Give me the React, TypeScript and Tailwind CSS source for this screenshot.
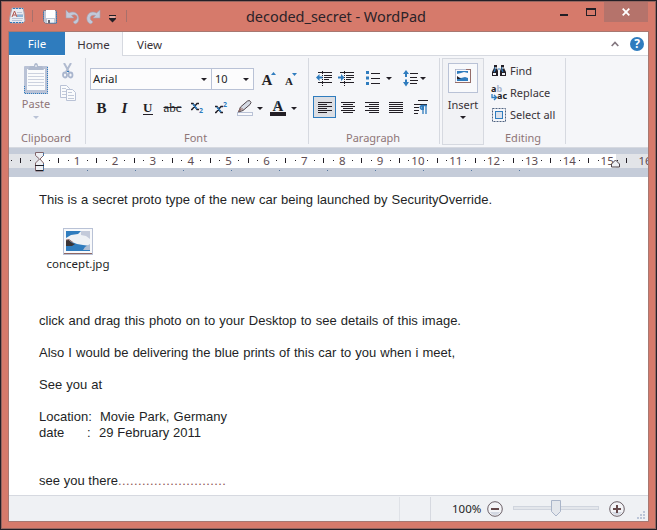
import type { ReactNode } from "react";

const ui = "font-['Noto_Sans','Open_Sans',sans-serif]";
const INK = "#231f26";
const BLUE = "#2f7cbe";
const STEEL = "#b9c2d6";

function Svg({ w, h, className = "", children }: { w: number; h: number; className?: string; children: ReactNode }) {
  return (
    <svg width={w} height={h} viewBox={`0 0 ${w} ${h}`} className={`block shrink-0 ${className}`} fill="none">
      {children}
    </svg>
  );
}

function Caret({ color = INK, className = "" }: { color?: string; className?: string }) {
  return (
    <Svg w={6} h={3} className={className}>
      <path d="M0 0h6L3 3z" fill={color} />
    </Svg>
  );
}

function Cell({ className, children }: { className: string; children: ReactNode }) {
  return <div className={`flex shrink-0 items-center justify-center ${className}`}>{children}</div>;
}

function Separator() {
  return <div className="mt-[2px] h-[86px] w-px shrink-0 bg-[#d6d9e0]" />;
}

function Picture({ w, h }: { w: number; h: number }) {
  return (
    <svg width={w} height={h} viewBox="0 0 30 27" className="block" fill="none">
      <rect x=".5" y=".5" width="29" height="26" fill="#f8f9fb" stroke="#b9c2d6" />
      <path d="M1 25.500h28" stroke="#8e6764" />
      <rect x="3" y="3" width="24" height="20" fill="#eef1f5" />
      <path d="M3 3h15l-3 3-7 1-5 3z" fill={BLUE} />
      <path d="M18 3h9v8l-4-3-5-1z" fill="#c3cada" />
      <path d="M3 12l6 2 5 2 6 1 7 1v5H3z" fill={BLUE} />
      <path d="M3 12l3 0 3 3 3 1-3 2H3z" fill="#3b3435" />
      <path d="M3 12l3-.5 4 3" stroke="#956d69" />
      <path d="M22 19l5-3v6h-7z" fill="#aebdd2" />
    </svg>
  );
}

function TitleBar() {
  return (
    <div className="flex h-[30px] w-[655px] shrink-0 items-start">
      <Svg w={112} h={28} className="ml-[7px]">
        <path d="M3 6h11l1 4 1 9-2 2H2l-2-2 2-9z" fill="#e9ecf1" stroke="#a89da8" />
        <path d="M4 6.500h10M1 20.500h13" stroke={BLUE} strokeDasharray="2 1" />
        <path d="M8 10.500h5M8 12.500h6M3 16.500h11M3 18.500h10" stroke={STEEL} />
        <path d="M3 15l2.500-6L8 15M4 13h3" stroke="#b0554e" />
        <path d="M8 14h6" stroke={BLUE} />
        <path d="M23.500 8v12" stroke="#a8706b" />
        <path d="M34.500 8.500h13v13h-11l-2-2z" fill="#bfc5d3" stroke="#8e7983" />
        <rect x="37" y="8" width="9" height="8" fill="#fff" />
        <path d="M38 17h7v4h-7z" fill="#f3f5f8" />
        <path d="M47.500 10v11H40M34.500 10v7" stroke={BLUE} strokeDasharray="1 1" />
        <path d="M39 18h2v3h-2z" fill="#6b6670" />
        <path d="M57 8v8h8l-2.500-2.500c4-2 7 1 5 4L64 20l2 2c4-1 4-5 3.500-7-1-5-6-6-9.500-4z" fill="#c2c9d9" stroke="#a79eac" strokeWidth=".6" />
        <path d="M91 8v8h-7l2.500-2.500c-4-1-6 1-5 4L84 20l-2 2c-4-1-4.500-5-4-7 1-5 6-6 9.500-4z" fill="#c2c9d9" stroke="#a79eac" strokeWidth=".6" />
        <path d="M100 13.500h7" stroke={INK} />
        <path d="M100 16h7v1l-3.500 3.500L100 17z" fill={INK} />
        <path d="M101 15h5" stroke="#fff" strokeWidth=".7" />
      </Svg>
      <div className="mt-[8px] ml-[5px] h-[12px] w-px shrink-0 bg-[#a8706b]" />
      <div className={`${ui} mt-[4px] ml-[119px] w-[179px] shrink-0 text-[14.500px] leading-[20px] tracking-[-0.050px] whitespace-nowrap text-[#2b2228] [text-align-last:justify]`}>
        decoded_secret - WordPad
      </div>
      <div className="mt-[12px] ml-[135px] h-[2px] w-[8px] shrink-0 bg-[#231f26]" />
      <div className="mt-[6px] ml-[18px] h-[8px] w-[10px] shrink-0 border border-t-2 border-[#231f26]" />
      <div className="ml-[8px] flex h-[20px] w-[44px] shrink-0 items-center justify-center bg-[#b5736b]">
        <Svg w={8} h={8}>
          <path d="M.7.700l6.600 6.600M7.300.700L.7 7.300" stroke="#fff" strokeWidth="1.800" />
        </Svg>
      </div>
    </div>
  );
}

function Tabs() {
  return (
    <div className={`${ui} flex h-[24px] shrink-0 bg-white text-[11.500px] leading-[25px] text-[#3a3338]`}>
      <div className="h-[23px] w-[56px] bg-[#2f7cbe] text-center leading-[23px] text-white">File</div>
      <div className="h-[24px] w-[58px] border-r border-[#d6d9e0] bg-[#f5f6f9] text-center">Home</div>
      <div className="flex flex-1 items-center border-b border-[#d6d9e0] pl-[14px]">
        <span className="flex-1 pt-[2px]">View</span>
        <Svg w={8} h={6} className="mr-[11px]">
          <path d="M.7 5L4 1.500 7.300 5" stroke="#83777f" strokeWidth="1.700" />
        </Svg>
        <div className="mr-[4px] flex h-[14px] w-[14px] items-center justify-center rounded-full bg-[#2f7cbe] text-[12px] leading-[14px] font-bold text-white">?</div>
      </div>
    </div>
  );
}

function GroupLabel({ className = "", children }: { className?: string; children: ReactNode }) {
  return <div className={`${ui} text-[11px] leading-[16px] text-[#8e7577] ${className}`}>{children}</div>;
}

function Clipboard() {
  return (
    <div className="flex w-[76px] shrink-0 flex-col">
      <div className="flex h-[74px]">
        <div className="ml-[13px] flex w-[28px] flex-col items-center pt-[7px]">
          <Svg w={26} h={32}>
            <rect x="1" y="3" width="24" height="28" rx="1" fill="#b9c2d6" />
            <path d="M24.500 4v26.500H1.500V22" stroke={BLUE} strokeDasharray="1 1" />
            <rect x="4" y="6" width="18" height="21" fill="#fafbfc" />
            <path d="M5 10.500h16M5 13.500h16M5 16.500h16M5 19.500h16M5 22.500h16" stroke="#ccd2df" />
            <path d="M7 3h4c0-4 4-4 4 0h4l2 4H5z" fill="#aeb9ce" />
            <path d="M12 3h2" stroke="#fff" />
          </Svg>
          <span className={`${ui} mt-[1px] text-[11px] leading-[16px] text-[#8e7577]`}>Paste</span>
          <Caret color="#b9c2d6" className="mt-[4px]" />
        </div>
        <div className="ml-[10px] pt-[7px]">
          <Svg w={16} h={40}>
            <path d="M4 0l5 9M11 0L6 9" stroke="#b1bbd0" strokeWidth="2" />
            <ellipse cx="5" cy="12" rx="2" ry="2.500" stroke="#aab6ce" strokeWidth="1.800" />
            <ellipse cx="10.500" cy="12" rx="2" ry="2.500" stroke="#aab6ce" strokeWidth="1.800" />
            <path d="M7 8.500h2" stroke={BLUE} />
            <path d="M.5 22.500h6l3 3v9h-9z" fill="#fafbfc" stroke="#b9c2d6" />
            <path d="M6.500 26.500h6l3 3v8h-9z" fill="#fafbfc" stroke="#b9c2d6" />
            <path d="M2 25.500h4M2 28.500h4M2 31.500h4M8 29.500h4M8 32.500h6M8 35.500h6" stroke="#c2cada" />
          </Svg>
        </div>
      </div>
      <GroupLabel className="w-full pl-[12px]">Clipboard</GroupLabel>
    </div>
  );
}

const serif = "font-['Liberation_Serif',serif] font-bold text-[#231f26]";

function FontGroup() {
  return (
    <div className="flex w-[222px] shrink-0 flex-col pl-[4px]">
      <div className={`${ui} mt-[12px] flex h-[22px] text-[11.500px] leading-[20px] text-[#231f26]`}>
        <div className="flex w-[122px] items-center justify-between border border-[#b9c2d6] bg-[#fcfcfd] pr-[4px] pl-[2px]">
          Arial <Caret />
        </div>
        <div className="-ml-px flex w-[43px] items-center justify-between border border-[#b9c2d6] bg-[#fcfcfd] pr-[4px] pl-[3px] text-[11px]">
          10 <Caret />
        </div>
        <Svg w={40} h={22} className="ml-[6px]">
          <text x="1.500" y="17" fontSize="15" className={serif} fill={INK}>A</text>
          <path d="M11 7l2.500-3L16 7z" fill={BLUE} />
          <text x="25" y="17" fontSize="11" className={serif} fill={INK}>A</text>
          <path d="M32 5h5l-2.500 3z" fill={BLUE} />
        </Svg>
      </div>
      <div className="mt-[6px] flex h-[24px] items-center">
        <Cell className={`w-[23px] text-[15px] ${serif}`}>B</Cell>
        <Cell className={`w-[23px] text-[15px] italic ${serif}`}>I</Cell>
        <Cell className="w-[24px]">
          <Svg w={12} h={16}>
            <text x="1" y="12" fontSize="13" className={serif} fill={INK}>U</text>
            <path d="M1 14.500h10" stroke={INK} />
          </Svg>
        </Cell>
        <Cell className="w-[25px] font-['Liberation_Serif',serif] text-[13px] text-[#231f26] line-through">abc</Cell>
        <Cell className="w-[24px]">
          <Svg w={14} h={14}>
            <path d="M1 2.500h2l4 6h2M1 8.500h1l5-6h2" stroke={INK} strokeWidth="1.400" />
            <path d="M3 3l4 5" stroke={BLUE} strokeWidth="1.600" />
            <text x="9" y="12" fontSize="7" fontWeight="700" className={ui} fill={BLUE}>2</text>
          </Svg>
        </Cell>
        <Cell className="w-[23px]">
          <Svg w={14} h={14}>
            <path d="M1 5.500h2l4 6h2M1 11.500h1l5-6h2" stroke={INK} strokeWidth="1.400" />
            <path d="M3 6l4 5" stroke={BLUE} strokeWidth="1.600" />
            <text x="9" y="6" fontSize="7" fontWeight="700" className={ui} fill={BLUE}>2</text>
          </Svg>
        </Cell>
        <Cell className="w-[26px]">
          <Svg w={18} h={18}>
            <rect x="1.500" y="13.500" width="15" height="3" fill="#fafafc" stroke="#b9c2d6" />
            <path d="M2.500 13l2-5 7-6 2-.5 1.500 2-1 2-7 6z" fill="#d5dae4" stroke="#51474d" />
            <path d="M2 13l2-4 2 2z" fill="#956d69" />
            <path d="M5 8.500l2.500 2.500" stroke="#956d69" />
          </Svg>
        </Cell>
        <Caret className="ml-[-1px]" />
        <Svg w={16} h={18} className="ml-[7px]">
          <text x="2.500" y="11.500" fontSize="15" className={serif} fill={INK}>A</text>
          <path d="M5 10L8 2" stroke={BLUE} strokeWidth=".8" />
          <rect y="13" width="16" height="4" fill={INK} />
        </Svg>
        <Caret className="ml-[5px]" />
      </div>
      <GroupLabel className="mt-[10px] pl-[94px]">Font</GroupLabel>
    </div>
  );
}

function Lines({ rows }: { rows: [number, number][] }) {
  return (
    <Svg w={16} h={11}>
      {rows.map(([x, w], i) => (
        <rect key={i} x={x} y={i * 2} width={w} height="1" fill={INK} />
      ))}
    </Svg>
  );
}

function Indent({ right = false }: { right?: boolean }) {
  return (
    <Svg w={17} h={15}>
      <path d="M2 1.500h14M2 11.500h14" stroke={INK} />
      <path d="M8 4.500h8M8 6.500h8M8 8.500h5" stroke={INK} />
      <path d="M6.500 0v15" stroke={INK} strokeDasharray="1 1" />
      <path d={right ? "M6.500 6.500L3 3v2.500H0v2h3V10z" : "M0 6.500L3.500 3v2.500h3v2h-3V10z"} fill={BLUE} />
    </Svg>
  );
}

function Paragraph() {
  return (
    <div className="flex w-[130px] shrink-0 flex-col pl-[4px]">
      <div className="mt-[13px] flex h-[18px] items-center pl-[3px]">
        <Indent />
        <div className="w-[5px]" />
        <Indent right />
        <Svg w={16} h={15} className="ml-[11px]">
          <path d="M0 0h3v3H0zM0 5.500h3v3H0zM0 11h3v3H0z" fill={BLUE} />
          <path d="M5 2.500h9M5 7.500h9M5 12.500h9" stroke={INK} />
        </Svg>
        <Caret className="ml-[4px]" />
        <Svg w={17} h={17} className="ml-[11px]">
          <path d="M3 0L6 4H4v3H2V4H0zM3 16.500L6 12H4V9.500H2V12H0z" fill={BLUE} />
          <path d="M7 3.500h8M7 7.500h7M7 10.500h8M7 13.500h7" stroke={INK} />
        </Svg>
        <Caret className="ml-0" />
      </div>
      <div className="mt-[9px] flex h-[22px] items-center">
        <Cell className="h-[22px] w-[23px] border border-[#2f7cbe] bg-[#dcdee3]">
          <Lines rows={[[1, 14], [1, 9], [1, 14], [1, 9], [1, 14], [1, 9]]} />
        </Cell>
        <Cell className="w-[24px]"><Lines rows={[[1, 14], [3, 10], [1, 14], [3, 10], [1, 14], [3, 10]]} /></Cell>
        <Cell className="w-[24px]"><Lines rows={[[1, 14], [5, 10], [1, 14], [5, 10], [1, 14], [5, 10]]} /></Cell>
        <Cell className="w-[23px]"><Lines rows={[[1, 14], [1, 14], [1, 14], [1, 14], [1, 14], [1, 14]]} /></Cell>
        <Cell className="w-[27px]">
          <Svg w={14} h={14}>
            <path d="M4 .5h10M0 4.500h13M0 7.500h5M0 10.500h5M0 13.500h4" stroke={INK} />
            <path d="M13 5.500H8c-2.500 0-2.500 4 1 4V14M9 5v9M12 5v9" stroke={BLUE} strokeWidth="1.300" />
            <path d="M7 6h3v4H8z" fill={BLUE} />
          </Svg>
        </Cell>
      </div>
      <GroupLabel className="mt-[12px] pl-[33px]">Paragraph</GroupLabel>
    </div>
  );
}

function Insert() {
  return (
    <div className={`${ui} mt-[2px] ml-[2px] flex h-[87px] w-[42px] shrink-0 flex-col items-center border border-[#d6d9e0] bg-[#f1f2f5] text-[11px] leading-[16px] text-[#3a3338]`}>
      <div className="mt-[4px] flex h-[30px] w-[30px] items-center justify-center border border-[#b9c2d6] bg-[#f8f9fb] pb-[5px]">
        <Svg w={16} h={14}>
          <rect x=".5" y=".5" width="15" height="13" fill="#fafafc" stroke="#956d69" />
          <path d="M.5 13V.5H11" stroke="#b9c2d6" />
          <path d="M2 2h11v2l-4-1-3 1-4 1z" fill={BLUE} />
          <path d="M2 8l4 1 4-1 3 1v3H2z" fill={BLUE} />
          <path d="M2 7l4 3H2z" fill={INK} />
        </Svg>
      </div>
      <span className="mt-[4px]">Insert</span>
      <Caret className="mt-[3px]" />
    </div>
  );
}

function Editing() {
  return (
    <div className={`${ui} flex w-[81px] shrink-0 flex-col pl-[7px] text-[11px] leading-[16px] text-[#3a3338]`}>
      <div className="mt-[7px] flex h-[16px] items-center">
        <Svg w={16} h={14} className="mr-[3px]">
          <path d="M3 1h3v3l1 3v5H1V8l2-4zM10 1h3v3l2 4v4H9V7l1-3z" fill={INK} />
          <path d="M4 3v3L3 8M11 3v3l1 2M7 5h2" stroke={BLUE} strokeWidth="1.200" />
          <path d="M2 9h3v2H2zM11 9h3v2h-3z" fill="#eef1f6" />
          <path d="M5 3v2M12 3v2" stroke="#fff" />
        </Svg>
        Find
      </div>
      <div className="mt-[6px] flex h-[16px] items-center">
        <div className="mr-[3px] flex h-[16px] w-[16px] shrink-0 flex-col text-[9px] leading-[8px] font-bold text-[#231f26]">
          <div className="h-[8px] whitespace-nowrap">
            a<span className="text-[#aab6ce]">b</span>
          </div>
          <div className="-mt-px flex h-[8px] whitespace-nowrap">
            <Svg w={6} h={7} className="mt-[2px]">
              <path d="M1 0v3.500h4M3 1l2.500 2.500L3 6" stroke={BLUE} strokeWidth="1.300" />
            </Svg>
            ac
          </div>
        </div>
        Replace
      </div>
      <div className="mt-[6px] flex h-[16px] items-center">
        <Svg w={16} h={14} className="mr-[3px]">
          <rect x="1.500" y=".5" width="13" height="13" stroke="#4f6380" strokeDasharray="2 1" />
          <rect x="4.500" y="3.500" width="7" height="7" fill="#dce2ec" stroke={BLUE} />
        </Svg>
        Select all
      </div>
      <GroupLabel className="mt-[7px] pl-[14px]">Editing</GroupLabel>
    </div>
  );
}

function Ruler() {
  const origin = 30.3;
  const unit = 37.86;
  const numbers = Array.from({ length: 16 }, (_, i) => i + 1);
  const quarters = Array.from({ length: 66 }, (_, i) => i - 3);
  const stops = Array.from({ length: 10 }, (_, i) => 78 + i * 48);
  return (
    <Svg w={639} h={29}>
      <rect width="639" height="29" fill="#c5ccd9" />
      <rect y="6" width="639" height="14" fill="#fff" />
      <rect y="6" width="30" height="14" fill="#e2e4e8" />
      <rect x="607" y="6" width="32" height="14" fill="#e2e4e8" />
      {quarters.map((q) => {
        const x = Math.round(origin + (q * unit) / 4);
        if (q % 4 === 0) return null;
        return q % 2 === 0 ? (
          <rect key={q} x={x} y="10" width="1" height="5" fill={INK} />
        ) : (
          <rect key={q} x={x} y="12" width="1" height="1" fill={INK} />
        );
      })}
      {numbers.map((n) => (
        <text key={n} x={origin + n * unit} y="17" fontSize="11.500" textAnchor="middle" className={ui} fill="#5e4d53">{n}</text>
      ))}
      {stops.map((x) => (
        <rect key={x} x={x} y="22" width="1" height="1" fill="#56779f" />
      ))}
      <path d="M26.500 4.500h8v3L31 11l3.500 4v8h-8v-8l4-4-4-3.500z" fill="#eef0f4" stroke="#81646a" />
      <path d="M26 17.500h9M27 22.500h7" stroke={INK} />
      <path d="M34.500 16v7M34.500 5v3" stroke={BLUE} strokeDasharray="1 1" />
      <path d="M602.500 19v-3l4-4 4 4v3z" fill="#eef0f4" stroke="#4f4349" />
    </Svg>
  );
}

function Line({ className, children }: { className: string; children: ReactNode }) {
  return <div className={`h-[16px] [text-align-last:justify] ${className}`}>{children}</div>;
}

function Document() {
  return (
    <div className="h-[318px] shrink-0 overflow-hidden bg-white pt-[15px] pl-[30px] font-['Liberation_Sans',Arial,sans-serif] text-[13px] leading-[16px] text-[#231f26]">
      <Line className="w-[453px]">This is a secret proto type of the new car being launched by SecurityOverride.</Line>
      <div className="mt-[20px] ml-[7px] flex w-[64px] flex-col items-center">
        <Picture w={30} h={27} />
        <div className={`${ui} mt-px text-[11.500px] leading-[16px] whitespace-nowrap`}>concept.jpg</div>
      </div>
      <Line className="mt-[41px] w-[422px]">click and drag this photo on to your Desktop to see details of this image.</Line>
      <Line className="mt-[16px] w-[416px]">Also I would be delivering the blue prints of this car to you when i meet,</Line>
      <Line className="mt-[16px] w-[63px]">See you at</Line>
      <div className="mt-[16px] flex h-[16px]">
        <span className="w-[61px]">Location:</span>
        <Line className="w-[127px]">Movie Park, Germany</Line>
      </div>
      <div className="flex h-[16px]">
        <span className="w-[48px]">date</span>
        <span className="w-[12px]">:</span>
        <Line className="w-[102px]">29 February 2011</Line>
      </div>
      <div className="mt-[32px] flex h-[16px]">
        <Line className="w-[79px]">see you there</Line>
        <span className="tracking-[0.400px] text-[#8e5552]">...........................</span>
      </div>
    </div>
  );
}

function ZoomButton({ plus = false }: { plus?: boolean }) {
  return (
    <Svg w={16} h={16}>
      <circle cx="8" cy="8" r="7.300" fill="#f3f4f7" stroke="#6b6067" />
      <path d="M3 11c2 4 8 4 10 0z" fill="#d3d8e2" />
      <path d={plus ? "M4 8h8M8 4v8" : "M4 8h8"} stroke="#65494b" strokeWidth="2" />
    </Svg>
  );
}

function StatusBar() {
  return (
    <div className={`${ui} flex h-[26px] shrink-0 items-center border-t border-[#d6d9e0] bg-[#eff1f4] text-[#231f26]`}>
      <div className="ml-[390px] h-[24px] w-px bg-[#dfe2e7]" />
      <div className="ml-[30px] h-[24px] w-px bg-[#d6d9e0]" />
      <span className="ml-[21px] w-[35px] text-[11.500px]">100%</span>
      <ZoomButton />
      <Svg w={86} h={17} className="mr-[10px] ml-[10px]">
        <rect x=".5" y="6.500" width="85" height="3" fill="#e3e6eb" stroke="#d0d5de" />
        <path d="M38.500.500h9v11L43 16l-4.500-4.500z" fill="#e4e7ec" stroke="#aab5c9" />
      </Svg>
      <ZoomButton plus />
      <Svg w={9} h={9} className="mt-[13px] ml-[12px]">
        <path d="M6 0h2v2H6zM3 3h2v2H3zM6 3h2v2H6zM0 6h2v2H0zM3 6h2v2H3zM6 6h2v2H6z" fill="#bcc6d8" />
      </Svg>
    </div>
  );
}

export default function App() {
  return (
    <div className="h-[530px] w-[657px] overflow-hidden border border-[#231f26] bg-[#d67a6b]">
      <div className="flex h-[528px] flex-col border border-[#956660]">
        <TitleBar />
        <div className="-mt-px ml-[6px] flex w-[641px] flex-col border border-[#a87871]">
          <Tabs />
          <div className="flex h-[92px] shrink-0 border-b border-[#d6d9e0] bg-[#f5f6f9]">
            <Clipboard />
            <Separator />
            <FontGroup />
            <Separator />
            <Paragraph />
            <Separator />
            <Insert />
            <Editing />
            <Separator />
          </div>
          <Ruler />
          <Document />
          <StatusBar />
        </div>
      </div>
    </div>
  );
}
